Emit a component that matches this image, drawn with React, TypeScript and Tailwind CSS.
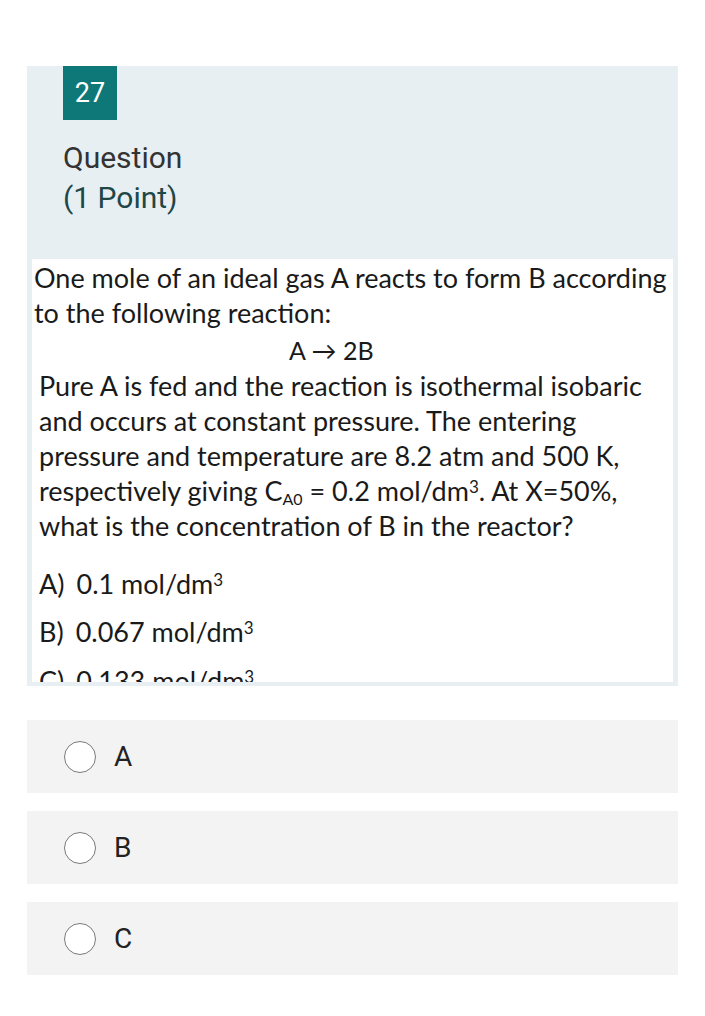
import React from "react";

const choices = ["A", "B", "C"];

function Sup() {
  return <sup className="text-[17px]">3</sup>;
}

function Opt({ label, value }: { label: string; value: string }) {
  return (
    <span className="whitespace-nowrap">
      {label}
      <span className="ml-[12px]">{value}</span>
      <Sup />
    </span>
  );
}

export default function App() {
  return (
    <div className="min-h-screen w-[705px] bg-white pt-[66px]" style={{ fontFamily: "Roboto, sans-serif" }}>
      <div className="ml-[27px] w-[651px] bg-[#e8eff2] pb-[4px]">
        <div className="ml-[36px] flex h-[54px] w-[54px] items-center justify-center bg-[#0e7878] text-[27px] text-white">
          27
        </div>
        <div className="pl-[36px] pt-[18px] text-[30px] leading-[40px]">
          <div className="text-[#333333]">Question</div>
          <div className="text-[#1f4747]">(1 Point)</div>
        </div>
        <div
          className="mx-[5px] mt-[41px] h-[423px] overflow-hidden bg-white text-[27px] leading-[35px] text-[#1a1a1a]"
          style={{ fontFamily: "Lato, 'Open Sans', sans-serif" }}
        >
          <div className="pl-[2px] pt-[1px]">
            <div className="whitespace-nowrap">One mole of an ideal gas A reacts to form B according</div>
            <div>to the following reaction:</div>
          </div>
          <div className="pl-[257px] pt-[3px] text-[25px] leading-[35px]">A → 2B</div>
          <div className="pl-[7px]">
            <div className="whitespace-nowrap">Pure A is fed and the reaction is isothermal isobaric</div>
            <div>and occurs at constant pressure. The entering</div>
            <div>pressure and temperature are 8.2 atm and 500 K,</div>
            <div className="whitespace-nowrap">
              respectively giving C<sub className="text-[16px]">A0</sub> = 0.2 mol/dm<Sup />. At X=50%,
            </div>
            <div>what is the concentration of B in the reactor?</div>
            <div className="pt-[23px]">
              <Opt label="A)" value="0.1 mol/dm" />
            </div>
            <div className="pt-[13px]">
              <Opt label="B)" value="0.067 mol/dm" />
            </div>
            <div className="pt-[14px]">
              <Opt label="C)" value="0.133 mol/dm" />
            </div>
          </div>
        </div>
      </div>
      <div className="ml-[27px] mt-[34px] flex w-[651px] flex-col gap-[18px]">
        {choices.map((c) => (
          <div key={c} className="flex h-[73px] items-center bg-[#f3f3f3] pl-[37px]">
            <div className="h-[32px] w-[32px] rounded-full border-[1.5px] border-[#7a7a7a] bg-white" />
            <span className="ml-[18px] text-[28px] text-[#222222]">{c}</span>
          </div>
        ))}
      </div>
    </div>
  );
}
